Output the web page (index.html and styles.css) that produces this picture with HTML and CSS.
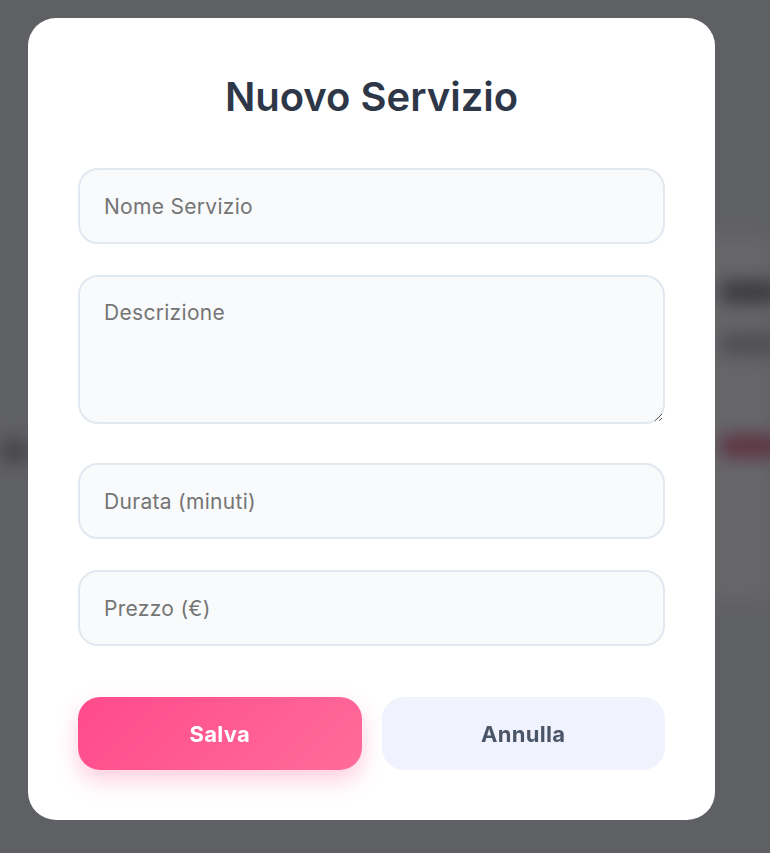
FILE: index.html
```html
<!DOCTYPE html>
<html lang="it">
<head>
<meta charset="utf-8">
<title>Nuovo Servizio</title>
<link rel="stylesheet" href="styles.css">
</head>
<body>
<div class="page">
  <div class="page-left">
    <div class="page-band band-l"></div>
  </div>
  <div class="page-card">
    <div class="page-band band-a"></div>
    <div class="page-band band-b"></div>
    <div class="page-band band-c"></div>
  </div>
</div>
<div class="overlay">
  <form class="modal">
    <h2 class="modal-title">Nuovo Servizio</h2>
    <div class="fields">
      <input class="field" type="text" placeholder="Nome Servizio">
      <textarea class="field field-area" placeholder="Descrizione"></textarea>
      <input class="field" type="number" placeholder="Durata (minuti)">
      <input class="field" type="number" placeholder="Prezzo (€)">
    </div>
    <div class="actions">
      <button type="button" class="btn btn-primary">Salva</button>
      <button type="button" class="btn btn-secondary">Annulla</button>
    </div>
  </form>
</div>
</body>
</html>
```
FILE: styles.css
```css
* { box-sizing: border-box; }
html, body { margin: 0; height: 100%; }
body {
  font-family: "Inter", "Noto Sans", sans-serif;
  background: #eeeff3;
  overflow: hidden;
}
.page {
  height: 100%;
  display: flex;
  justify-content: space-between;
  align-items: flex-start;
  filter: blur(9px);
}
.page-left {
  padding-top: 440px;
  width: 40px;
}
.band-l { width: 30px; height: 22px; background: #a9aaad; }
.page-card {
  margin-top: 235px;
  width: 70px;
  height: 365px;
  background: #ffffff;
  padding: 46px 0 0 20px;
  display: flex;
  flex-direction: column;
  gap: 40px;
}
.page-band { height: 22px; border-radius: 6px; }
.band-a { width: 60px; background: #8e8f93; }
.band-b { width: 60px; background: #c2c3c6; margin-top: -10px; }
.band-c { width: 60px; background: #e87b98; margin-top: 40px; }
.overlay {
  position: fixed;
  inset: 0;
  background: rgba(0, 0, 5, 0.6);
  padding: 18px 0 0 28px;
}
.modal {
  width: 687px;
  height: 802px;
  background: #ffffff;
  border-radius: 28px;
  padding: 50px 50px;
  display: flex;
  flex-direction: column;
}
.modal-title {
  margin: 5px 0 47px;
  text-align: center;
  font-size: 40px;
  line-height: 48px;
  font-weight: 600;
  color: #2d3748;
}
.fields {
  display: flex;
  flex-direction: column;
  gap: 31px;
}
.field {
  display: block;
  width: 100%;
  height: 76px;
  padding: 22px 24px;
  border: 2px solid #e2e8f0;
  border-radius: 20px;
  background: #f8fafc;
  font-family: inherit;
  font-size: 21px;
  letter-spacing: 0.3px;
  line-height: 28px;
  color: #2d3748;
  outline: none;
  margin: 0;
}
.field::placeholder { color: #757575; }
.field-area {
  height: 149px;
  margin-bottom: 8px;
  resize: vertical;
}
.field::-webkit-outer-spin-button,
.field::-webkit-inner-spin-button { -webkit-appearance: none; margin: 0; }
.actions {
  margin-top: 51px;
  display: flex;
  gap: 20px;
}
.btn {
  flex: 1;
  height: 73px;
  border: none;
  border-radius: 22px;
  font-family: inherit;
  font-size: 22px;
  letter-spacing: 0.3px;
  font-weight: 700;
}
.btn-primary {
  background: linear-gradient(135deg, #ff4a8a 0%, #ff6c9b 100%);
  color: #ffffff;
  box-shadow: 0 10px 22px rgba(255, 77, 141, 0.28);
}
.btn-secondary {
  background: #f0f3fe;
  color: #4a5568;
}
```
